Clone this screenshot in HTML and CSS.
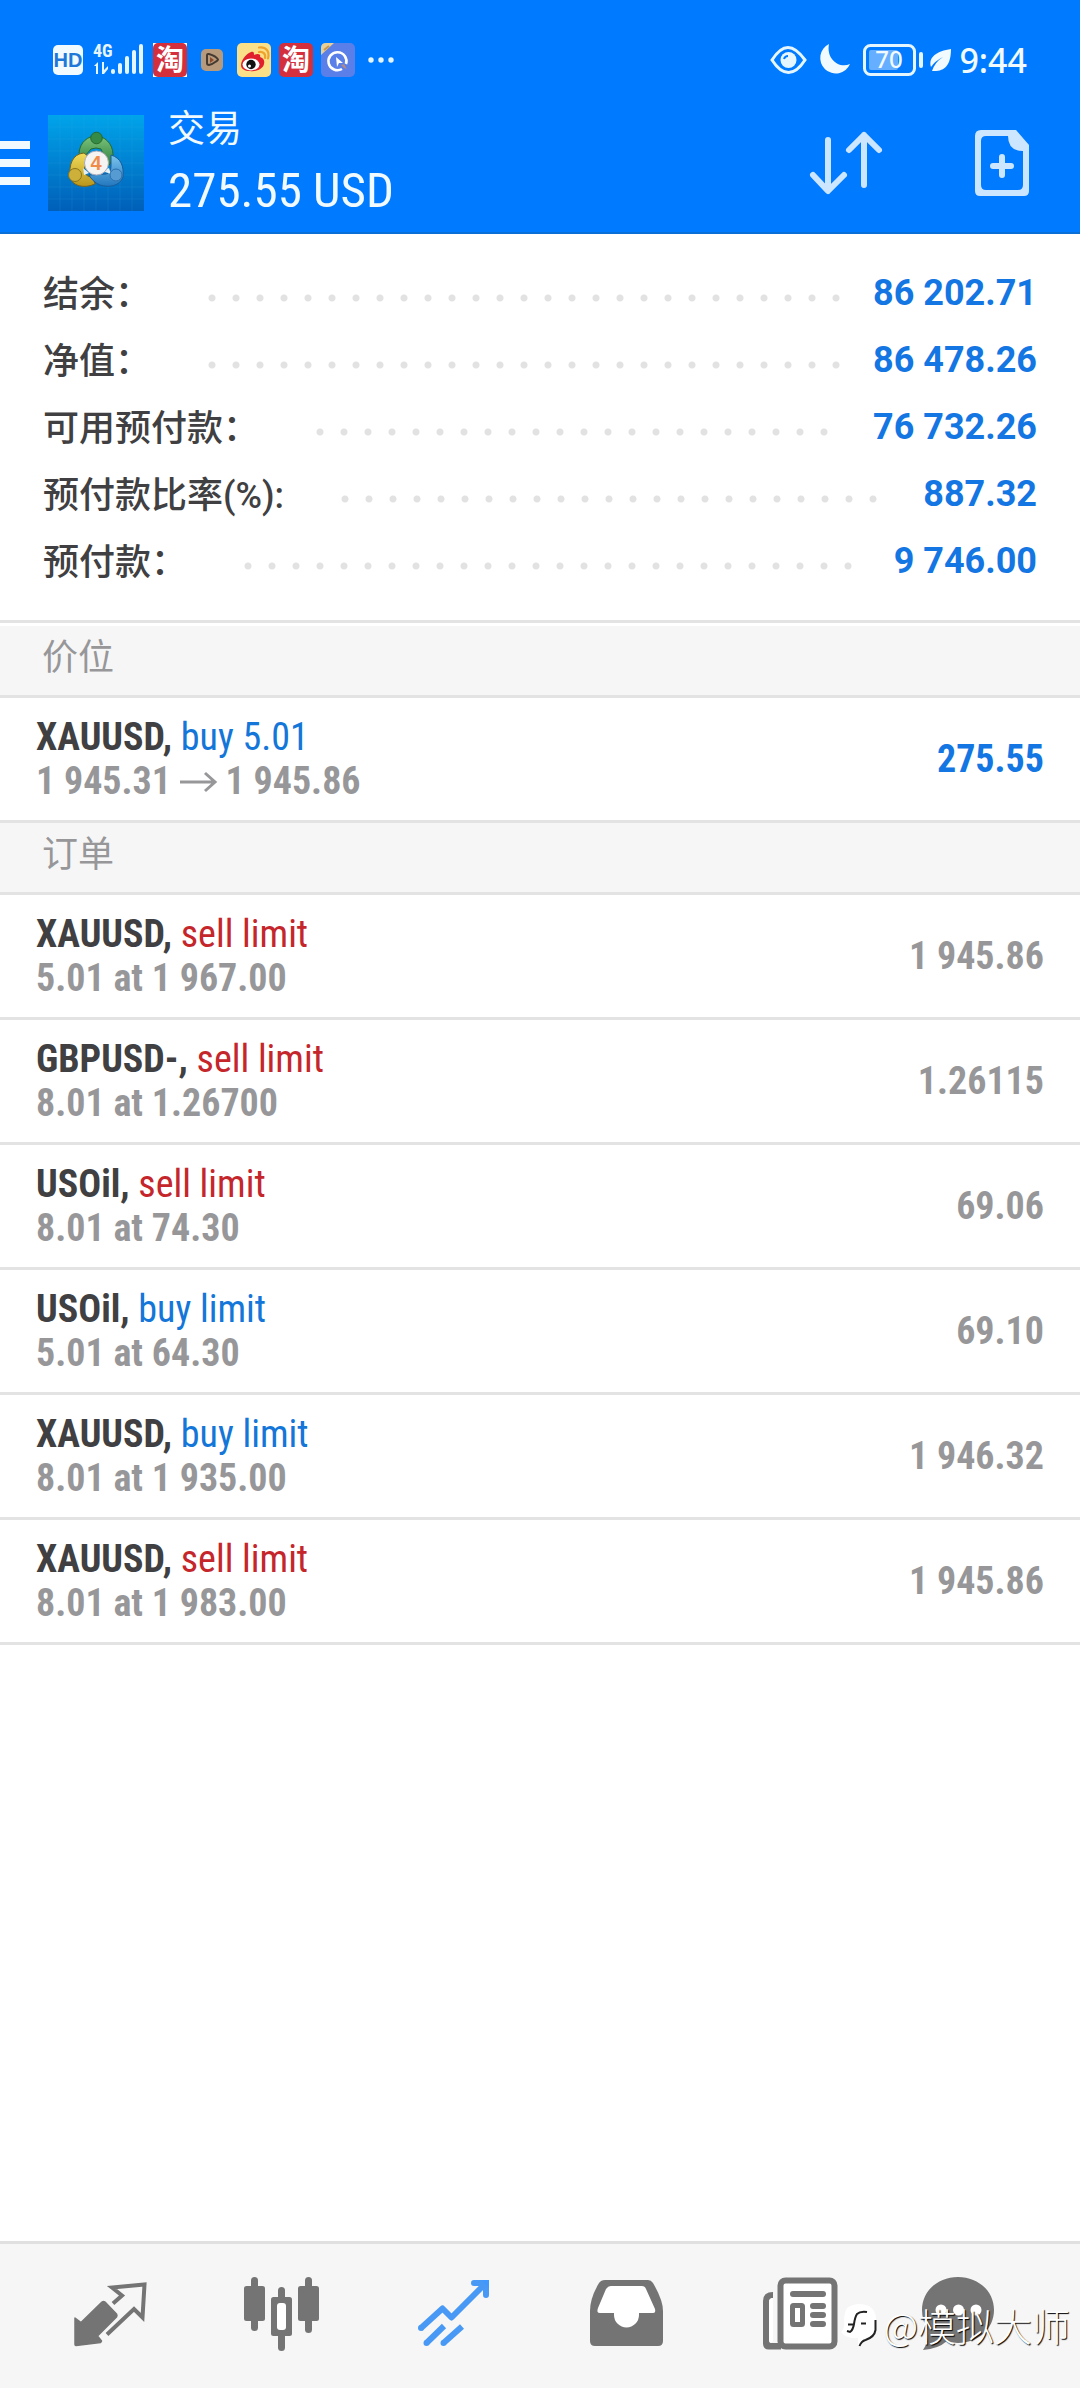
FILE: index.html
```html
<!DOCTYPE html>
<html lang="zh-CN">
<head>
<meta charset="utf-8">
<meta name="viewport" content="width=device-width, initial-scale=1">
<title>交易</title>
<link rel="stylesheet" href="styles.css">
</head>
<body>
<header class="header">
  <div class="status">
    <div class="status-left">
      <svg width="30" height="36" viewBox="0 0 30 36"><rect y="3" width="30" height="30" rx="5" fill="#f0faff"/><text x="15" y="25" text-anchor="middle" class="svg-hd">HD</text></svg>
      <svg width="54" height="36" viewBox="0 0 54 36" fill="#e6f6ff"><text x="2" y="15" class="svg-4g">4G</text><path d="M3 24l4-4v12H5v-8zM11 20h2v8l4-4v3l-4 5h-2z"/><rect x="20" y="27" width="4" height="5" rx="2"/><rect x="27" y="21" width="4" height="11" rx="2"/><rect x="34" y="14" width="4" height="18" rx="2"/><rect x="41" y="8" width="4" height="24" rx="2"/><rect x="48" y="2" width="4" height="30" rx="2"/></svg>
      <svg width="34" height="36" viewBox="0 0 34 36"><rect y="1" width="34" height="34" fill="#fff"/><rect y="1" width="34" height="34" rx="5" fill="#d32f3c"/><text x="17" y="28" text-anchor="middle" class="svg-tao">淘</text></svg>
      <svg width="34" height="36" viewBox="0 0 34 36"><rect x="6" y="7" width="22" height="22" rx="5" fill="#b79a7c"/><path d="M12 13.500q0-2 2-1.500 7 2 9 5.500 0 1-2 2-4 3-7 3.500-2 0-2-2z" fill="none" stroke="#453a32" stroke-width="2"/><path d="M15 15l4 3-4 3z" fill="#8a4a2a"/></svg>
      <svg width="34" height="36" viewBox="0 0 34 36"><rect y="1" width="34" height="34" rx="5" fill="#fbe08a"/><path d="M4 23c0-5 6-12 10-13 3-1 3 1 3 3 4-2 7-1 6 2 3 1 5 3 4 7-1 5-8 8-14 7-5 0-9-2-9-6z" fill="#e0202c"/><ellipse cx="14" cy="22.500" rx="8.500" ry="6" fill="#fff"/><circle cx="14" cy="22.500" r="4.700" fill="#111"/><circle cx="12.500" cy="24" r="1.500" fill="#fff"/><path d="M22 10c4-1 7 2 6 6M22 5.500c7-1 11 4 9 11" fill="none" stroke="#f0a32c" stroke-width="2.200" stroke-linecap="round"/></svg>
      <svg width="34" height="36" viewBox="0 0 34 36"><rect y="1" width="34" height="34" rx="5" fill="#d32f3c"/><text x="17" y="28" text-anchor="middle" class="svg-tao">淘</text></svg>
      <svg width="34" height="36" viewBox="0 0 34 36"><rect y="1" width="34" height="34" rx="5" fill="#5a7fe8"/><path d="M0 13V6q0-5 5-5h8z" fill="#e8cf98"/><path d="M3 8l5-4" stroke="#c9964a" stroke-width="2"/><path d="M21 27a9 9 0 1 1 4-5" fill="none" stroke="#fff" stroke-width="2.600"/><path d="M15 15l7 6-4 0-2 4z" fill="#fff"/><path d="M20 23l3-1 3 5-3-1z" fill="#b08a86"/></svg>
      <svg width="34" height="36" viewBox="0 0 34 36" fill="#e6f6ff"><circle cx="8" cy="18" r="2.700"/><circle cx="18" cy="18" r="2.700"/><circle cx="28" cy="18" r="2.700"/></svg>
    </div>
    <div class="status-right">
      <svg width="42" height="36" viewBox="0 0 42 36"><path d="M3 18Q11 5.500 19 5.500T36 18Q28 30.500 19.500 30.500T3 18z" fill="none" stroke="#e6f6ff" stroke-width="3"/><circle cx="19.500" cy="18" r="8" fill="#e6f6ff"/><path d="M15 17q1-3 4-3" fill="none" stroke="#007aff" stroke-width="2"/></svg>
      <svg width="38" height="36" viewBox="0 0 38 36"><path d="M12 2a15.500 15.500 0 1 0 21 20C22 27 9 17 12 2z" fill="#f0faff"/></svg>
      <svg width="62" height="36" viewBox="0 0 62 36"><rect x="3.500" y="3.500" width="50" height="29" rx="6" fill="none" stroke="#e6f6ff" stroke-width="3"/><rect x="8" y="8" width="29" height="20" rx="2" fill="#66aeff"/><text x="28" y="26" text-anchor="middle" class="svg-battery">70</text><rect x="58" y="10" width="4" height="16" rx="2" fill="#e6f6ff"/></svg>
      <svg width="23" height="36" viewBox="0 0 23 36"><path d="M22 7C8 9-1 15 2 25q4-6 12-10Q6 20 3 29c12 1 19-5 19-22z" fill="#f0faff"/></svg>
      <span class="clock">9:44</span>
    </div>
  </div>
  <div class="appbar">
    <button class="menu" aria-label="菜单"><svg width="30" height="44" viewBox="0 0 30 44" fill="#f0faff"><path d="M0 0h30v8H0zM0 18h30v8H0zM0 36h30v8H0z"/></svg></button>
    <svg class="logo" width="96" height="96" viewBox="0 0 96 96">
      <defs>
        <linearGradient id="sky" x1="0" y1="0" x2="0" y2="1"><stop offset="0" stop-color="#00a4ea"/><stop offset="1" stop-color="#005fb8"/></linearGradient>
        <linearGradient id="green" x1="0" y1="0" x2="0" y2="1"><stop offset="0" stop-color="#7cc47c"/><stop offset="1" stop-color="#2b7d3c"/></linearGradient>
        <linearGradient id="gold" x1="0" y1="0" x2="0" y2="1"><stop offset="0" stop-color="#f2dc5a"/><stop offset="1" stop-color="#b8951c"/></linearGradient>
        <linearGradient id="blue" x1="0" y1="0" x2="0" y2="1"><stop offset="0" stop-color="#7cc4ee"/><stop offset="1" stop-color="#2377be"/></linearGradient>
      </defs>
      <rect width="96" height="96" fill="url(#sky)"/>
      <path d="M12 0v96M24 0v96M36 0v96M48 0v96M60 0v96M72 0v96M84 0v96M0 12h96M0 24h96M0 36h96M0 48h96M0 60h96M0 72h96M0 84h96" stroke="#39b8ee" stroke-opacity=".15"/>
      <g stroke-width="1">
        <path d="M31 38C32 27 40 21 48 21s17 7 17 19q0 7-5 11l-7-17q-5-2-10 0l-7 8z" fill="url(#green)" stroke="#246b2a"/>
        <path d="M36 38c-12 1-15 12-14 24 2 9 14 12 25 7l-2-7c-6 0-9-3-9-8l5-12z" fill="url(#gold)" stroke="#75621b"/>
        <path d="M63 40c10 3 13 11 12 22-3 9-14 11-23 8-5-2-9-6-11-10l17-1q5-1 5-8z" fill="url(#blue)" stroke="#195c99"/>
        <path d="M54 56l9 3-2-6zM35 53l1 7 5-2z" fill="#e4f0f4" stroke="none"/>
        <circle cx="48.500" cy="23" r="5.800" fill="#358a45" stroke="#246b2a"/>
        <circle cx="27" cy="60" r="6.500" fill="#cdb03a" stroke="#8b741b"/>
        <circle cx="68" cy="60" r="6" fill="#569bd2" stroke="#2c6fae"/>
      </g>
      <circle cx="48.500" cy="48" r="12" fill="#f6f4f2" stroke="#aab"/>
      <text x="48" y="55" text-anchor="middle" class="svg-four">4</text>
    </svg>
    <div class="heading">
      <h1 class="title">交易</h1>
      <div class="amount">275.55 USD</div>
    </div>
    <div class="actions">
      <button aria-label="排序"><svg width="72" height="64" viewBox="0 0 72 64" fill="none" stroke="#cce6ff" stroke-width="6" stroke-linecap="round" stroke-linejoin="round"><path d="M18 9v50M3 44l15 16 16-16M54 54V4M39 19L54 4l15 15"/></svg></button>
      <button aria-label="新订单"><svg width="54" height="66" viewBox="0 0 54 66"><path d="M6 0h35l13 15v46q0 5-5 5H5q-5 0-5-5V6q0-6 6-6zm5 6q-5 0-5 5v44q0 5 5 5h32q5 0 5-5V21q-15 0-15-15z" fill="#cce6ff" fill-rule="evenodd"/><path d="M27 27v18M18 36h18" stroke="#cce6ff" stroke-width="6" stroke-linecap="round"/></svg></button>
    </div>
  </div>
</header>

<main class="main">
  <dl class="summary">
    <div class="sum-row"><dt>结余：</dt><dd>86 202.71</dd></div>
    <div class="sum-row"><dt>净值：</dt><dd>86 478.26</dd></div>
    <div class="sum-row"><dt>可用预付款：</dt><dd>76 732.26</dd></div>
    <div class="sum-row"><dt>预付款比率(%):</dt><dd>887.32</dd></div>
    <div class="sum-row"><dt>预付款：</dt><dd>9 746.00</dd></div>
  </dl>

  <h2 class="section first">价位</h2>
  <ul class="list">
    <li class="item">
      <div><div class="line"><b>XAUUSD,</b> <span class="buy">buy 5.01</span></div>
      <div class="line detail">1 945.31 <svg class="arrow" width="37" height="20" viewBox="0 0 37 20" fill="none" stroke="#97979a" stroke-width="3"><path d="M0 8h35M25-1l10 9-10 9"/></svg> 1 945.86</div></div>
      <div class="price profit">275.55</div>
    </li>
  </ul>

  <h2 class="section">订单</h2>
  <ul class="list">
    <li class="item">
      <div><div class="line"><b>XAUUSD,</b> <span class="sell">sell limit</span></div><div class="line detail">5.01 at 1 967.00</div></div>
      <div class="price">1 945.86</div>
    </li>
    <li class="item">
      <div><div class="line"><b>GBPUSD-,</b> <span class="sell">sell limit</span></div><div class="line detail">8.01 at 1.26700</div></div>
      <div class="price">1.26115</div>
    </li>
    <li class="item">
      <div><div class="line"><b>USOil,</b> <span class="sell">sell limit</span></div><div class="line detail">8.01 at 74.30</div></div>
      <div class="price">69.06</div>
    </li>
    <li class="item">
      <div><div class="line"><b>USOil,</b> <span class="buy">buy limit</span></div><div class="line detail">5.01 at 64.30</div></div>
      <div class="price">69.10</div>
    </li>
    <li class="item">
      <div><div class="line"><b>XAUUSD,</b> <span class="buy">buy limit</span></div><div class="line detail">8.01 at 1 935.00</div></div>
      <div class="price">1 946.32</div>
    </li>
    <li class="item">
      <div><div class="line"><b>XAUUSD,</b> <span class="sell">sell limit</span></div><div class="line detail">8.01 at 1 983.00</div></div>
      <div class="price">1 945.86</div>
    </li>
  </ul>
</main>

<nav class="tabs">
  <button aria-label="行情"><svg width="76" height="76" viewBox="0 0 76 76"><path d="M3 42l6 4.500L30 26q1.500-1 3 0l11.500 12q1 1.500 0 3L25.500 60l4 5-1 1.500L4 69.500q-1 0-1-1z" fill="#747474" stroke="#747474" stroke-width="1.500" stroke-linejoin="round"/><path d="M41 27.500l9-8-10-8 32.500-3-2 33L62 33 35 58.500" fill="none" stroke="#747474" stroke-width="4"/></svg></button>
  <button aria-label="图表"><svg width="76" height="76" viewBox="0 0 76 76" fill="#747474"><rect y="10" width="21" height="35" rx="2.500"/><rect x="7" y="1" width="7" height="54" rx="3.500"/><rect x="27" y="21" width="21" height="39" rx="2.500"/><rect x="34" y="11" width="7" height="64" rx="3.500"/><rect x="33" y="27" width="9" height="27" rx="3" fill="#fff"/><rect x="54" y="10" width="21" height="35" rx="2.500"/><rect x="61" y="1" width="7" height="56" rx="3.500"/></svg></button>
  <button aria-label="交易" aria-current="page"><svg width="76" height="76" viewBox="0 0 76 76" fill="none" stroke="#4799f5" stroke-width="6"><path d="M4.500 52.500L26.500 32.500l9 9L69 8M10.500 67L28 50M27.500 67L46 50.500" stroke-linejoin="round"/><path d="M58 7h12v12" stroke-linecap="round"/><path d="M66 4h7v8z" fill="#3f98ff" stroke="none"/><g fill="#4799f5" stroke="none"><circle cx="5" cy="52" r="3"/><circle cx="10.500" cy="67" r="3"/><circle cx="27.500" cy="67" r="3"/></g></svg></button>
  <button aria-label="历史"><svg width="76" height="76" viewBox="0 0 76 76"><path d="M17 4h43q3 0 5 3 10 17 10 28v30q0 5-5 5H7q-5 0-5-5V35Q2 22 11 7q2-3 6-3z" fill="#747474"/><path d="M23 10h31q3 0 4 3l9 20q1 4-2 4H51v2a12.500 12.500 0 0 1-25 0v-2H12q-4 0-2-5l8-19q2-3 5-3z" fill="#fff"/></svg></button>
  <button aria-label="新闻"><svg width="76" height="76" viewBox="0 0 76 76"><path d="M21 73.500H9q-6 0-6-6V25q0-9 10-9v6q-4 0-4 4v38q0 3 4 3h8z" fill="#747474"/><path d="M13 22v42q0 3-2 3t-2-3V26q0-4 4-4z" fill="#fff"/><rect x="20.500" y="4.500" width="54" height="66" rx="5" fill="#fff" stroke="#747474" stroke-width="6"/><path d="M33 18h30M53 30h10M53 39h10M53 48h10" stroke="#747474" stroke-width="6" stroke-linecap="round"/><rect x="32.500" y="29.500" width="10" height="19" rx="1" fill="#fff" stroke="#747474" stroke-width="5"/></svg></button>
  <button aria-label="消息"><svg width="76" height="76" viewBox="0 0 76 76"><path d="M38 1c20 0 36 14 36 33S58 67 38 67q-5 0-11-2-9 8-24 9 6-8 5-20Q2 45 2 34C2 15 18 1 38 1z" fill="#747474"/><g fill="#fff"><circle cx="21" cy="34" r="5.500"/><circle cx="38.500" cy="34" r="5.500"/><circle cx="56" cy="34" r="5.500"/></g></svg></button>
</nav>
<div class="watermark">
  <svg width="38" height="46" viewBox="0 0 38 46"><path d="M8 6Q18-1 30 4q7 4 7 13v11q-1 8-12 11l-6 5v-8Q7 37 2 30q4-4 3-10 0-9 3-14z" fill="#fff"/><path d="M28 10q-7-1-10 2-2 3-3 10-1 6-4 8l-3-1M9 22.500h6M22 21.500h5M36.500 18v10q-1 7-10 10-4 1-6 6" fill="none" stroke="#222" stroke-width="2"/></svg>
  <span>@模拟大师</span>
</div>
</body>
</html>
```
FILE: styles.css
```css
* { box-sizing: border-box; }

body {
  margin: 0;
  min-height: 100vh;
  display: flex;
  flex-direction: column;
  position: relative;
  background: #fff;
  color: #404042;
  font-family: Roboto, "Noto Sans CJK SC", sans-serif;
  font-size: 36px;
}

h1, h2, ul, dl, dd { margin: 0; padding: 0; font-weight: 400; }
ul { list-style: none; }
svg { display: block; overflow: visible; flex: none; }
button { padding: 0; border: 0; background: none; color: inherit; font: inherit; }

/* Header */
.header { background: #007aff; border-bottom: 2px solid #0a6fd6; color: #f0faff; }

.status {
  display: flex;
  justify-content: space-between;
  padding: 42px 53px 0;
}
.status-left, .status-right { display: flex; align-items: center; height: 36px; }
.status-left { gap: 8px; }
.status-right { gap: 6px; }
.clock { padding-left: 1px; font: 500 34px/36px "Noto Sans", sans-serif; }

.svg-hd { font: 700 20px "Liberation Sans", sans-serif; fill: #1f78d8; }
.svg-4g { font: 700 18px "Roboto Condensed", Roboto, sans-serif; }
.svg-tao { font: 700 28px "Noto Sans CJK SC", sans-serif; fill: #fff; }
.svg-battery { font: 500 24px "Noto Sans", sans-serif; fill: #f0faff; }
.svg-four { font: 700 20px "Liberation Sans", sans-serif; fill: #f08c4a; }

.appbar {
  display: flex;
  align-items: center;
  padding: 24px 51px 8px 0;
}
.logo { margin: 0 24px 0 18px; }
.title { font-size: 37px; line-height: 56px; }
.amount { font: 400 49px/66px "Roboto Condensed", Roboto, sans-serif; }
.actions { display: flex; align-items: center; gap: 93px; margin-left: auto; }

/* Account summary */
.main { flex: 1; }
.summary { padding: 26px 43px 25px; border-bottom: 3px solid #e3e3e3; }
.sum-row { display: flex; align-items: center; height: 67px; }
.sum-row dt { padding-top: 3px; font-weight: 500; line-height: 67px; }
.sum-row dd {
  order: 2;
  color: #1376e2;
  font-size: 36px;
  font-weight: 700;
  line-height: 67px;
}
.sum-row::after {
  content: "";
  order: 1;
  flex: 1;
  height: 8px;
  margin: 8px 30px 0 49px;
  background: radial-gradient(circle at center, #e2e2e2 3px, transparent 4px) 0 0 / 24px 8px repeat-x;
}

/* Lists */
.section {
  height: 72px;
  padding: 8px 42px 0;
  border-bottom: 3px solid #e3e3e3;
  background: #f6f6f6;
  color: #97979a;
  font-size: 36px;
  line-height: 48px;
}
.section.first { margin-top: 3px; }

.item {
  display: flex;
  align-items: center;
  justify-content: space-between;
  height: 125px;
  padding: 0 36px;
  border-bottom: 3px solid #e3e3e3;
  font-family: "Roboto Condensed", Roboto, sans-serif;
  font-size: 38px;
}
.line { line-height: 44px; }
.detail, .price { color: #97979a; font-weight: 700; }
.arrow { display: inline-block; }
.buy { color: #1376d8; }
.sell { color: #c4262b; }
.price.profit { color: #1376e2; }

/* Bottom navigation */
.tabs {
  display: grid;
  grid-template-columns: repeat(5, 172fr) 148fr;
  justify-items: center;
  padding: 32px 48px 36px 24px;
  border-top: 3px solid #e0e0e0;
  background: #f6f6f6;
}

.watermark {
  position: absolute;
  right: 10px;
  bottom: 36px;
  display: flex;
  align-items: center;
  gap: 6px;
  color: #fff;
  font: 300 38px/54px "Noto Sans CJK SC", sans-serif;
  text-shadow: 1px 1px 1px #000;
}
```
